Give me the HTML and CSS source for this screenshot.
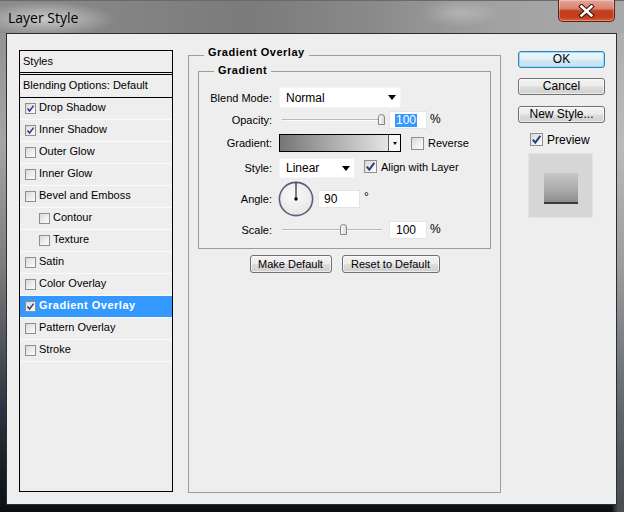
FILE: index.html
```html
<!DOCTYPE html>
<html>
<head>
<meta charset="utf-8">
<title>Layer Style</title>
<link rel="stylesheet" href="styles.css">
</head>
<body>
<div class="window">
  <div class="titlebar">
    <span class="title">Layer Style</span>
    <span class="close">
      <svg width="17" height="14" viewBox="0 0 17 14"><path d="M3.5 2.5 L13.5 11.5 M13.5 2.5 L3.5 11.5" stroke="#3a1610" stroke-width="4.6" stroke-linecap="square"/><path d="M3.5 2.5 L13.5 11.5 M13.5 2.5 L3.5 11.5" stroke="#ffffff" stroke-width="2.6" stroke-linecap="square"/></svg>
    </span>
  </div>
  <div class="client">
    <div class="styles">
      <div class="sp-head">Styles</div>
      <div class="sp-blend">Blending Options: Default</div>
      <div class="sp-item"><span class="cb"><svg width="9" height="9" viewBox="0 0 9 9"><path d="M1.5 4.5 L3.6 7 L7.6 1.6" fill="none" stroke="#2c3d86" stroke-width="1.5"/></svg></span>Drop Shadow</div>
      <div class="sp-item"><span class="cb"><svg width="9" height="9" viewBox="0 0 9 9"><path d="M1.5 4.5 L3.6 7 L7.6 1.6" fill="none" stroke="#2c3d86" stroke-width="1.5"/></svg></span>Inner Shadow</div>
      <div class="sp-item"><span class="cb"></span>Outer Glow</div>
      <div class="sp-item"><span class="cb"></span>Inner Glow</div>
      <div class="sp-item"><span class="cb"></span>Bevel and Emboss</div>
      <div class="sp-item sub"><span class="cb"></span>Contour</div>
      <div class="sp-item sub"><span class="cb"></span>Texture</div>
      <div class="sp-item"><span class="cb"></span>Satin</div>
      <div class="sp-item"><span class="cb"></span>Color Overlay</div>
      <div class="sp-item sel"><span class="cb"><svg width="9" height="9" viewBox="0 0 9 9"><path d="M1.5 4.5 L3.6 7 L7.6 1.6" fill="none" stroke="#2c3d86" stroke-width="1.5"/></svg></span>Gradient Overlay</div>
      <div class="sp-item"><span class="cb"></span>Pattern Overlay</div>
      <div class="sp-item"><span class="cb"></span>Stroke</div>
    </div>

    <fieldset class="group outer">
      <legend>Gradient Overlay</legend>
      <fieldset class="group inner">
        <legend>Gradient</legend>
        <div class="frow r-blend">
          <span class="flabel">Blend Mode:</span>
          <div class="select sel-blend"><span>Normal</span><span class="tri"></span></div>
        </div>
        <div class="frow r-opacity">
          <span class="flabel">Opacity:</span>
          <div class="slider"><span class="track"></span><span class="thumb" style="left:99px"><svg width="7" height="11" viewBox="0 0 7 11"><defs><linearGradient id="tg1" x1="0" y1="0" x2="1" y2="0"><stop offset="0" stop-color="#ffffff"/><stop offset="1" stop-color="#d6d6d6"/></linearGradient></defs><path d="M0.5 10.5 V3 Q0.5 0.5 3.5 0.5 Q6.5 0.5 6.5 3 V10.5 Z" fill="url(#tg1)" stroke="#858585"/></svg></span></div>
          <div class="num"><span class="hl">100</span></div>
          <span class="unit">%</span>
        </div>
        <div class="frow r-grad">
          <span class="flabel">Gradient:</span>
          <div class="gradbar"><span class="gradfill"></span><span class="gradarrow"><span class="tri-s"></span></span></div>
          <span class="cb lg cb-rev"></span>
          <span class="cbtext">Reverse</span>
        </div>
        <div class="frow r-style">
          <span class="flabel">Style:</span>
          <div class="select sel-style"><span>Linear</span><span class="tri"></span></div>
          <span class="cb lg cb-align"><svg width="11" height="11" viewBox="0 0 11 11"><path d="M1.8 5.6 L4.3 8.6 L9.3 1.8" fill="none" stroke="#2c3d86" stroke-width="2"/></svg></span>
          <span class="cbtext align-text">Align with Layer</span>
        </div>
        <div class="frow r-angle">
          <span class="flabel">Angle:</span>
          <svg class="dial" width="36" height="36" viewBox="0 0 36 36"><defs><radialGradient id="dg" cx="0.45" cy="0.4" r="0.6"><stop offset="0" stop-color="#fbfbfb"/><stop offset="1" stop-color="#e6e6e6"/></radialGradient></defs><circle cx="18" cy="18" r="16.6" fill="url(#dg)" stroke="#56607c" stroke-width="1.6"/><line x1="18" y1="18" x2="18" y2="1.5" stroke="#000" stroke-width="1"/><circle cx="18" cy="18" r="1.7" fill="#000"/></svg>
          <div class="num num-angle">90</div>
          <span class="deg">°</span>
        </div>
        <div class="frow r-scale">
          <span class="flabel">Scale:</span>
          <div class="slider"><span class="track"></span><span class="thumb" style="left:61px"><svg width="7" height="11" viewBox="0 0 7 11"><defs><linearGradient id="tg2" x1="0" y1="0" x2="1" y2="0"><stop offset="0" stop-color="#ffffff"/><stop offset="1" stop-color="#d6d6d6"/></linearGradient></defs><path d="M0.5 10.5 V3 Q0.5 0.5 3.5 0.5 Q6.5 0.5 6.5 3 V10.5 Z" fill="url(#tg2)" stroke="#858585"/></svg></span></div>
          <div class="num">100</div>
          <span class="unit">%</span>
        </div>
      </fieldset>
      <div class="btn-row">
        <button class="btn btn-make">Make Default</button>
        <button class="btn btn-reset">Reset to Default</button>
      </div>
    </fieldset>

    <div class="side">
      <button class="btn sbtn default">OK</button>
      <button class="btn sbtn s-cancel">Cancel</button>
      <button class="btn sbtn s-new">New Style...</button>
      <div class="preview-check"><span class="cb lg"><svg width="11" height="11" viewBox="0 0 11 11"><path d="M1.8 5.6 L4.3 8.6 L9.3 1.8" fill="none" stroke="#2c3d86" stroke-width="2"/></svg></span><span class="pv-text">Preview</span></div>
      <div class="preview-box"><div class="swatch"></div></div>
    </div>
  </div>
</div>
</body>
</html>
```
FILE: styles.css
```css
* { box-sizing: border-box; }
html, body { margin: 0; padding: 0; }
body {
  width: 624px;
  height: 512px;
  overflow: hidden;
  font-family: "Liberation Sans", Arial, sans-serif;
  font-size: 11px;
  color: #000;
}
.window {
  width: 624px;
  height: 512px;
  display: flex;
  flex-direction: column;
  background:
    linear-gradient(90deg, rgba(0,0,0,0) 0%, rgba(0,0,0,0) 98%, rgba(255,255,255,0.25) 99%, rgba(255,255,255,0.25) 100%),
    linear-gradient(180deg, #8e8e8e 0%, #a4a4a4 28%, #7c7c7c 52%, #2a3440 80%, #0c0f12 100%);
}
.titlebar {
  height: 33px;
  flex: none;
  display: flex;
  align-items: flex-start;
  background:
    radial-gradient(ellipse 70px 17px at 46px 18px, rgba(255,255,255,0.55), rgba(255,255,255,0) 100%),
    radial-gradient(ellipse 40px 14px at 460px 12px, rgba(255,255,255,0.25), rgba(255,255,255,0) 100%),
    linear-gradient(90deg, #8c8c8c 0%, #7b7b7b 40%, #8a8a8a 60%, #a2a2a2 80%, #a9a9a9 100%);
  border-top: 1px solid #6a6a6a;
}
.title {
  font-family: "Open Sans", "Noto Sans", sans-serif;
  font-size: 14px;
  line-height: 19px;
  margin: 7px 0 0 8px;
  color: #000;
}
.close {
  margin-left: auto;
  margin-right: 9px;
  margin-top: -1px;
  width: 57px;
  height: 22px;
  border: 1px solid #5a2218;
  border-top: none;
  border-radius: 0 0 5px 5px;
  background: linear-gradient(180deg, #e3a595 0%, #d98572 40%, #c2401f 52%, #c63c1c 80%, #d9603b 100%);
  box-shadow: inset 0 0 0 1px rgba(255,255,255,0.3);
  display: flex;
  align-items: center;
  justify-content: center;
}
.client {
  flex: none;
  margin: 0 7px 0 6px;
  height: 472px;
  border: 1px solid #2e2e2e;
  background: #eeeeee;
  display: flex;
  align-items: flex-start;
  padding: 11px 0 0 12px;
}

/* Styles list */
.styles {
  flex: none;
  width: 154px;
  height: 442px;
  margin-top: 5px;
  border: 1px solid #000;
  display: flex;
  flex-direction: column;
}
.sp-head {
  height: 24px;
  padding: 0 0 2px 3px;
  border-bottom: 3px double #000;
  display: flex;
  align-items: center;
}
.sp-blend {
  height: 23px;
  padding: 0 0 2px 3px;
  border-bottom: 1px solid #000;
  display: flex;
  align-items: center;
}
.sp-item {
  height: 22px;
  padding: 0 0 3px 5px;
  border-bottom: 1px solid #fafafa;
  display: flex;
  align-items: center;
}
.sp-item > .cb { margin-top: 3px; }
.sp-item.sub { padding-left: 19px; }
.sp-item.sel {
  background: #3399ff;
  color: #fff;
  font-weight: bold;
  letter-spacing: 0.5px;
}
.cb {
  flex: none;
  width: 11px;
  height: 11px;
  margin-right: 3px;
  border: 1px solid #8e8f8f;
  background: linear-gradient(135deg, #d8d8d8 0%, #f0f0f0 60%, #fbfbfb 100%);
  display: flex;
  align-items: center;
  justify-content: center;
}
.cb.lg {
  width: 13px;
  height: 13px;
  margin-right: 0;
}

/* group boxes */
.group {
  margin: 0;
  padding: 0;
  min-width: 0;
  border: 1px solid #9c9c9c;
}
.group > legend {
  padding: 0 4px;
  margin-left: 15px;
  font-weight: bold;
  font-size: 11px;
  letter-spacing: 0.5px;
  line-height: 14px;
}
.outer {
  flex: none;
  width: 313px;
  height: 448px;
  margin-left: 15px;
}
.outer > legend { padding-bottom: 6px; }
.inner {
  margin: -2px 9px 0;
  padding: 8px 0 9px;
}
.inner > legend { padding-bottom: 2px; }
.frow {
  display: flex;
  align-items: center;
}
.flabel {
  flex: none;
  width: 73px;
  margin-right: 7px;
  text-align: right;
}
.r-blend { height: 21px; }
.r-opacity { height: 18px; margin-top: 3px; }
.r-grad { height: 18px; margin-top: 5px; }
.r-style { height: 20px; margin-top: 6px; }
.r-angle { height: 36px; margin-top: 3px; }
.r-scale { height: 18px; margin-top: 4px; }

.select {
  flex: none;
  height: 100%;
  background: #fff;
  border: 1px solid #f4f4f4;
  display: flex;
  align-items: center;
  padding-left: 6px;
  font-size: 12px;
}
.sel-blend { width: 122px; }
.sel-style { width: 76px; }
.tri {
  margin-left: auto;
  margin-right: 4px;
  width: 0;
  height: 0;
  border-top: 5px solid #000;
  border-left: 4.5px solid transparent;
  border-right: 4.5px solid transparent;
}

.slider {
  flex: none;
  position: relative;
  width: 106px;
  height: 18px;
  display: flex;
  align-items: center;
}
.track {
  margin-left: 3px;
  width: 100px;
  height: 2px;
  border-top: 1px solid #b8b8b8;
  border-bottom: 1px solid #fbfbfb;
}
.thumb {
  position: absolute;
  top: 3px;
  width: 7px;
  height: 11px;
  display: flex;
}
.num {
  flex: none;
  height: 18px;
  width: 38px;
  margin-left: 4px;
  background: #fff;
  border: 1px solid #e4e4e4;
  display: flex;
  align-items: center;
  padding-left: 6px;
  font-size: 12px;
}
.hl {
  background: #3399ff;
  color: #fff;
  line-height: 13px;
  padding: 0 1px;
  margin-left: -1px;
}
.unit {
  margin-left: 3px;
  font-size: 12px;
  margin-bottom: 3px;
}

.gradbar {
  flex: none;
  width: 122px;
  height: 18px;
  border: 1px solid #000;
  display: flex;
}
.gradfill {
  flex: 1;
  background: linear-gradient(90deg, #767676 0%, #a8a8a8 45%, #e4e4e4 100%);
}
.gradarrow {
  flex: none;
  width: 12px;
  border-left: 1px solid #5a5a5a;
  background: #f6f6f6;
  display: flex;
  align-items: center;
  justify-content: center;
}
.tri-s {
  width: 0;
  height: 0;
  border-top: 3px solid #000;
  border-left: 2.5px solid transparent;
  border-right: 2.5px solid transparent;
}
.cb-rev { margin-left: 10px; }
.cbtext { margin-left: 4px; }
.cb-align { margin-left: 9px; margin-bottom: 3px; }
.align-text { margin-bottom: 3px; }

.dial { flex: none; margin-left: -1px; display: block; }
.num-angle { width: 42px; margin-left: 4px; padding-left: 5px; }
.deg { margin-left: 4px; font-size: 12px; margin-bottom: 4px; }

/* buttons */
.btn {
  font: inherit;
  color: #000;
  height: 18px;
  padding: 0;
  border: 1px solid #707070;
  border-radius: 3px;
  background: linear-gradient(180deg, #f3f3f3 0%, #ebebeb 48%, #dddddd 52%, #cfcfcf 100%);
  box-shadow: inset 0 0 0 1px rgba(255,255,255,0.6);
  line-height: 16px;
}
.btn-row {
  display: flex;
  justify-content: center;
  gap: 10px;
  margin-top: 6px;
}
.btn-make { width: 82px; }
.btn-reset { width: 98px; }

.side {
  flex: none;
  width: 87px;
  margin: 6px 0 0 17px;
  display: flex;
  flex-direction: column;
}
.sbtn {
  width: 87px;
  height: 17px;
  font-size: 12px;
  line-height: 15px;
}
.sbtn.default {
  border-color: #3c7fb1;
  background: linear-gradient(180deg, #eef7fc 0%, #e2f1fa 48%, #d2e8f5 52%, #c6e0f0 100%);
  box-shadow: inset 0 0 0 1px #8fdcfb;
}
.s-cancel { margin-top: 10px; }
.s-new { margin-top: 11px; }
.preview-check {
  margin-top: 9px;
  padding-left: 12px;
  height: 15px;
  display: flex;
  align-items: center;
  font-size: 12px;
}
.pv-text { margin-left: 4px; }
.preview-box {
  margin-top: 6px;
  margin-left: 10px;
  width: 65px;
  height: 65px;
  background: #d6d6d6;
  border: 1px solid #e3e3e3;
  display: flex;
  justify-content: center;
  padding-top: 19px;
}
.swatch {
  width: 34px;
  height: 31px;
  background: linear-gradient(180deg, #c6c6c6 0%, #a9a9a9 60%, #8d8d8d 100%);
  border-bottom: 2px solid #3a3a3a;
}
```
